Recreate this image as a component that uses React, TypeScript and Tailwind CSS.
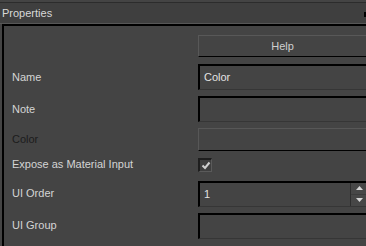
import React from "react";

const labelCls = "pl-[8px] text-[#d4d4d4]";

const EditField: React.FC<{ value?: string; spinner?: boolean }> = ({ value, spinner }) => (
  <div className="flex h-[26px] w-[170px] border-t-2 border-l-2 border-b border-t-black border-l-black border-b-[#363636] bg-[#444444]">
    <div className="flex flex-1 items-center pl-[4px] text-[#e2e2e2]">{value}</div>
    {spinner && (
      <div className="flex w-[18px] flex-col border-l border-[#2e2e2e] bg-[#474747]">
        <div className="flex flex-1 items-center justify-center">
          <svg width="7" height="4" viewBox="0 0 7 4">
            <polygon points="0,4 7,4 3.5,0" fill="#d6d6d6" />
          </svg>
        </div>
        <div className="flex flex-1 items-center justify-center border-t border-[#3c3c3c]">
          <svg width="7" height="4" viewBox="0 0 7 4">
            <polygon points="0,0 7,0 3.5,4" fill="#d6d6d6" />
          </svg>
        </div>
      </div>
    )}
  </div>
);

const App: React.FC = () => {
  return (
    <div
      className="relative h-[246px] w-[366px] overflow-hidden bg-[#444444] text-[11px]"
      style={{ fontFamily: '"Liberation Sans", Arial, sans-serif' }}
    >
      {/* rollout header */}
      <div className="mt-[2px] flex h-[22px] items-center border-t border-b border-t-[#2c2c2c] border-b-[#575757] bg-[#3f3f3f] pl-[2px] text-[#d8d8d8]">
        Properties
      </div>
      <div className="absolute right-0 top-[12px] h-[5px] w-[2px] bg-black" />

      {/* panel */}
      <div className="ml-[2px] h-[230px] border-t-2 border-l-2 border-black">
        <div className="grid grid-cols-[194px_170px] items-center">
          <div className="mt-[9px]" />
          <div className="mt-[9px] flex h-[22px] items-center justify-center border-t border-l border-b border-t-[#585858] border-l-[#585858] border-b-black bg-[#444444] pr-[2px] text-[#cfcfcf]">
            Help
          </div>

          <div className={`mt-[7px] ${labelCls}`}>Name</div>
          <div className="mt-[7px]">
            <EditField value="Color" />
          </div>

          <div className={`mt-[6px] ${labelCls}`}>Note</div>
          <div className="mt-[6px]">
            <EditField />
          </div>

          <div className="mt-[6px] pl-[8px] text-[#1c1c1c]">Color</div>
          <div className="mt-[6px] h-[23px] border-t border-l border-b border-t-[#575757] border-l-[#575757] border-b-black bg-[#444444]" />

          <div className={`mt-[5px] ${labelCls}`}>Expose as Material Input</div>
          <div className="mt-[5px] flex h-[13px]">
            <div className="flex h-[14px] w-[14px] items-center justify-center border-t-2 border-l-2 border-r border-b border-t-[#1e1e1e] border-l-[#1e1e1e] border-r-[#5a5a5a] border-b-[#5a5a5a] bg-[#3e3e3e]">
              <svg width="10" height="9" viewBox="0 0 10 9">
                <polyline points="1.5,4.5 4,7 8.5,1.5" fill="none" stroke="#cfcfcf" strokeWidth="2" />
              </svg>
            </div>
          </div>

          <div className={`mt-[8px] ${labelCls}`}>UI Order</div>
          <div className="mt-[8px]">
            <EditField value="1" spinner />
          </div>

          <div className={`mt-[6px] ${labelCls}`}>UI Group</div>
          <div className="mt-[6px]">
            <EditField />
          </div>
        </div>
      </div>
    </div>
  );
};

export default App;
